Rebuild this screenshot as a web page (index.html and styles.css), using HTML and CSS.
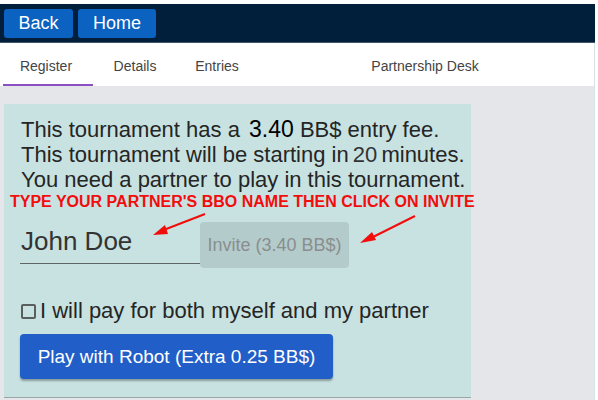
FILE: index.html
```html
<!DOCTYPE html>
<html>
<head>
<meta charset="utf-8">
<link rel="stylesheet" href="styles.css">
</head>
<body>
<div class="page">
  <header class="topbar">
    <button class="nav-btn back">Back</button>
    <button class="nav-btn home">Home</button>
  </header>
  <nav class="tabs">
    <div class="tab tab-register active">Register</div>
    <div class="tab tab-details">Details</div>
    <div class="tab tab-entries">Entries</div>
    <div class="tab tab-desk">Partnership Desk</div>
  </nav>
  <main class="content">
    <section class="panel">
      <p class="line">This tournament has a <span class="fee">3.40</span> BB$ entry fee.</p>
      <p class="line">This tournament will be starting in <span class="mins">20</span> minutes.</p>
      <p class="line">You need a partner to play in this tournament.</p>
      <p class="note">TYPE YOUR PARTNER'S BBO NAME THEN CLICK ON INVITE</p>
      <div class="invite-row">
        <div class="name-field">John Doe</div>
        <button class="invite-btn">Invite (3.40 BB$)</button>
      </div>
      <div class="check-row"><span class="box"></span><span>I will pay for both myself and my partner</span></div>
      <button class="robot-btn">Play with Robot (Extra 0.25 BB$)</button>
      <svg class="arrows" width="467" height="60" viewBox="0 0 467 60">
        <line x1="201" y1="5" x2="157" y2="22" stroke="#f20d0d" stroke-width="2"/>
        <polygon points="149,26 161,16 164,25" fill="#f20d0d"/>
        <line x1="411" y1="7" x2="365" y2="30" stroke="#f20d0d" stroke-width="2"/>
        <polygon points="356,34 368,23 372,31" fill="#f20d0d"/>
      </svg>
    </section>
  </main>
</div>
</body>
</html>
```

FILE: styles.css
```css
html, body {
  margin: 0;
  padding: 0;
  background: #ffffff;
}
.page {
  width: 595px;
  height: 400px;
  padding-top: 4px;
  box-sizing: border-box;
  font-family: "Liberation Sans", Arial, sans-serif;
  display: flex;
  flex-direction: column;
  overflow: hidden;
}
.topbar {
  height: 39px;
  background: #011f3b;
  display: flex;
  align-items: center;
  gap: 5px;
  padding: 0 4px;
  box-sizing: border-box;
  border-bottom: 1px solid #43556a;
}
.nav-btn {
  height: 29px;
  border: none;
  border-radius: 3px;
  background: #0b62c0;
  color: #ffffff;
  font-family: "Liberation Sans", Arial, sans-serif;
  font-size: 18px;
  line-height: 29px;
  margin-top: 1px;
}
.back { width: 69px; padding: 0; }
.home { width: 78px; padding: 0; }
.tabs {
  height: 43px;
  background: #ffffff;
  display: flex;
  padding-left: 3px;
  border-right: 1px solid #d8e2e4;
}
.tab {
  font-size: 14px;
  color: #444;
  display: flex;
  align-items: center;
  justify-content: center;
  box-sizing: border-box;
  height: 43px;
  padding-top: 2px;
}
.tab-register { width: 90px; padding-right: 4px; }
.tab-details { width: 84px; }
.tab-entries { width: 80px; }
.tab-desk { width: 130px; margin-left: 103px; }
.tab.active {
  border-bottom: 2px solid #8a4fc0;
  padding-top: 4px;
}
.content {
  flex: 1;
  background: #e5e6ea;
  padding: 18px 0 0 4px;
  border-right: 1px solid #d8e2e4;
}
.panel {
  position: relative;
  width: 467px;
  height: 294px;
  box-sizing: border-box;
  background: #c7e2e1;
  padding: 13px 0 0 17px;
  border-bottom: 1px solid #9aa5a5;
}
.line {
  margin: 0;
  font-size: 22px;
  line-height: 25px;
  color: #252525;
}
.fee {
  color: #000;
  font-size: 23px;
  margin-left: 3px;
}
.mins {
  color: #333;
  font-size: 22px;
  margin: 0 -2px;
}
.note {
  margin: 1px 0 0 -11px;
  font-size: 16px;
  font-weight: bold;
  color: #f20d0d;
  line-height: 18px;
  white-space: nowrap;
}
.invite-row {
  display: flex;
  align-items: flex-start;
  margin-top: 11px;
}
.name-field {
  width: 180px;
  height: 42px;
  box-sizing: border-box;
  border-bottom: 1px solid #5f6666;
  font-size: 26px;
  color: #333;
  padding-top: 4px;
  margin-left: -1px;
  padding-left: 1px;
}
.invite-btn {
  width: 149px;
  height: 46px;
  border: none;
  border-radius: 4px;
  background: #b4cbcb;
  color: #8a8e8e;
  font-family: "Liberation Sans", Arial, sans-serif;
  font-size: 18px;
  padding: 0;
}
.check-row {
  display: flex;
  align-items: center;
  gap: 4px;
  margin-top: 32px;
  font-size: 22px;
  color: #252525;
  height: 22px;
}
.box {
  display: block;
  width: 11px;
  height: 11px;
  border: 2px solid #5a5e5e;
  border-radius: 2px;
  margin-top: 1px;
  flex: none;
}
.robot-btn {
  display: block;
  margin-top: 12px;
  margin-left: -1px;
  width: 313px;
  height: 45px;
  border: none;
  border-radius: 4px;
  background: #215ec8;
  color: #ffffff;
  font-family: "Liberation Sans", Arial, sans-serif;
  font-size: 19px;
  padding: 0;
  box-shadow: 0 2px 2px rgba(0,0,0,0.3);
}
.arrows {
  position: absolute;
  left: 0;
  top: 105px;
}
```
